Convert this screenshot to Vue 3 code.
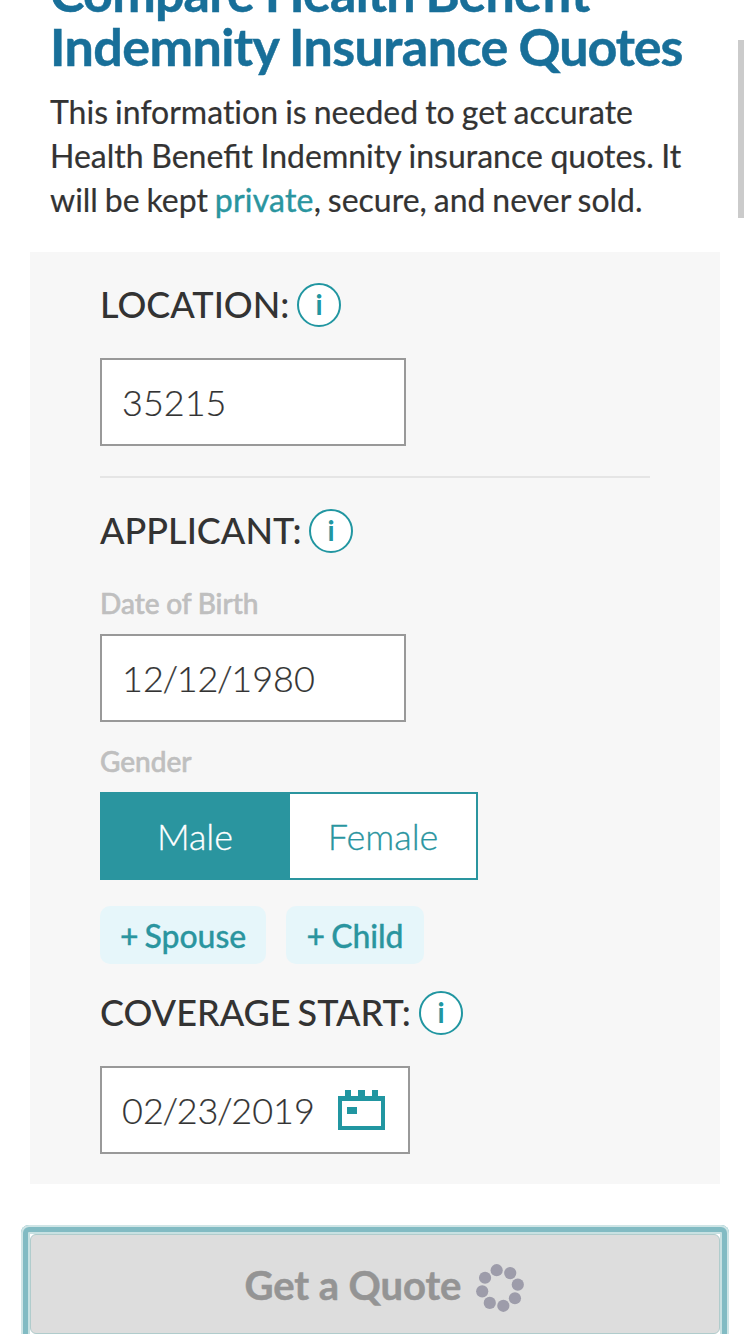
<script setup>
import { ref } from 'vue'

const gender = ref('Male')
const birth = ['12', '12', '1980']
const start = ['02', '23', '2019']
const dots = Array.from({ length: 8 }, (_, i) => {
  const a = ((-100.6 + i * 45) * Math.PI) / 180
  return { x: 24 + 18.1 * Math.cos(a), y: 24 + 18.1 * Math.sin(a) }
})
</script>

<template>
  <main class="page">
    <header class="intro">
      <h1>
        <span class="line top">Compare Health Benefit</span>
        <span class="line">Indemnity Insurance <span class="tight">Quotes</span></span>
      </h1>
      <p>
        <span class="line first">This informat&zwnj;ion is needed to get accurate</span>
        <span class="line second">Health Benefit Indemnity insurance quotes. It</span>
        <span class="line third">will be kept <a>private</a>, secure, and never sold.</span>
      </p>
    </header>

    <section class="card">
      <div class="heading"><h2 class="location">LOCATION:</h2><i class="info">i</i></div>
      <div class="field zip">35215</div>
      <hr />
      <div class="heading"><h2 class="applicant">APPLICANT:</h2><i class="info">i</i></div>
      <label class="label dob-label">Date of Birth</label>
      <div class="field dob">
        <span><template v-for="(n, i) in birth" :key="i"><b v-if="i" class="slash">/</b>{{ n }}</template></span>
      </div>
      <label class="label gender-label">Gender</label>
      <div class="toggle">
        <button v-for="g in ['Male', 'Female']" :key="g" :class="{ active: gender === g }" @click="gender = g">{{ g }}</button>
      </div>
      <div class="chips">
        <button class="spouse">+ Spouse</button>
        <button class="child">+ Child</button>
      </div>
      <div class="heading coverage-row"><h2 class="coverage">COVERAGE START:</h2><i class="info">i</i></div>
      <div class="field start">
        <span class="date"><template v-for="(n, i) in start" :key="i"><b v-if="i" class="slash">/</b>{{ n }}</template></span>
        <svg class="calendar" width="48" height="40" viewBox="0 0 48 40">
          <path fill="#2196a1" fill-rule="evenodd" d="M0 6H7V0H13V6H20V0H27V6H34V0H40V6H47V40H0ZM4 11V36H43V11Z" />
          <path fill="#2196a1" d="M9 17H19V24H9Z" />
        </svg>
      </div>
    </section>

    <div class="ring">
      <button class="quote">
        <span>Get a Quote</span>
        <svg width="48" height="48" viewBox="0 0 48 48">
          <circle v-for="(d, i) in dots" :key="i" :cx="d.x" :cy="d.y" r="6.1" fill="#9d9caa" />
        </svg>
      </button>
    </div>
    <div class="scrollbar"></div>
  </main>
</template>

<style>
body {
  background: #fff;
  overflow: hidden;
}
</style>

<style scoped>
.page {
  position: relative;
  display: flow-root;
  box-sizing: border-box;
  width: 750px;
  height: 1334px;
  overflow: hidden;
  font-family: Lato, sans-serif;
  color: #333;
}
button {
  font-family: inherit;
  margin: 0;
  padding: 0;
  border: 0;
}
.intro {
  margin-top: -35px;
  padding-left: 50px;
  height: 287px;
  box-sizing: border-box;
}
.line {
  display: block;
  white-space: nowrap;
}
h1 {
  margin: 0;
  font-size: 52px;
  line-height: 54px;
  font-weight: 700;
  letter-spacing: -0.56px;
  word-spacing: -1.2px;
  color: #186f99;
  -webkit-text-stroke: 0.5px #186f99;
}
.top {
  letter-spacing: -0.8px;
}
.tight {
  letter-spacing: -1.05px;
}
p {
  margin: 17px 0 0;
  font-size: 32px;
  line-height: 44px;
  -webkit-text-stroke: 0.2px;
}
.first { word-spacing: -1.1px; }
.second { word-spacing: -0.6px; }
.third { word-spacing: -1.3px; }
a {
  color: #2a959f;
  letter-spacing: 0.2px;
  -webkit-text-stroke: 0.4px;
}
.card {
  box-sizing: border-box;
  width: 690px;
  height: 932px;
  margin-left: 30px;
  padding: 31px 70px 0;
  background: #f7f7f7;
}
.heading {
  display: flex;
  align-items: center;
  height: 44px;
}
h2 {
  margin: 0;
  padding-bottom: 2px;
  font-size: 36px;
  line-height: 42px;
  font-weight: 500;
  white-space: nowrap;
}
.location { width: 197px; }
.applicant { width: 209px; }
.coverage {
  width: 319px;
  word-spacing: -2px;
}
.info {
  box-sizing: border-box;
  width: 44px;
  height: 44px;
  border: 2px solid #2196a1;
  border-radius: 50%;
  background: #fff;
  color: #2196a1;
  font-size: 28px;
  line-height: 38px;
  font-weight: 700;
  font-style: normal;
  text-align: center;
}
.field {
  box-sizing: border-box;
  display: flex;
  align-items: center;
  width: 306px;
  height: 88px;
  padding-left: 20px;
  border: 2px solid #999;
  background: #fff;
  font-size: 36px;
  font-weight: 300;
  -webkit-text-stroke: 0.2px;
}
.slash {
  margin: 0 -1.4px;
  font-weight: inherit;
}
.zip {
  margin-top: 31px;
}
hr {
  margin: 30px 0 31px;
  border: 0;
  height: 2px;
  background: #e5e5e5;
}
.label {
  display: block;
  height: 34px;
  font-size: 28px;
  line-height: 34px;
  font-weight: 500;
  word-spacing: -0.5px;
  color: #bfbfbf;
  -webkit-text-stroke: 0.6px;
}
.dob-label { margin-top: 33px; }
.dob { margin-top: 14px; }
.gender-label { margin-top: 22px; }
.toggle {
  box-sizing: border-box;
  display: flex;
  width: 378px;
  height: 88px;
  margin-top: 14px;
  border: 2px solid #2a959f;
}
.toggle button {
  background: #fff;
  color: #2a959f;
  font-size: 36px;
  font-weight: 300;
  -webkit-text-stroke: 0.3px;
}
.toggle button.active {
  width: 188px;
  padding-right: 2px;
  background: #2a959f;
  color: #fff;
}
.toggle button:last-child {
  flex: 1;
}
.chips {
  display: flex;
  gap: 20px;
  margin-top: 26px;
}
.chips button {
  height: 58px;
  border-radius: 10px;
  background: #e6f6fa;
  color: #2a959f;
  font-size: 32px;
  font-weight: 500;
  letter-spacing: -0.1px;
  word-spacing: -1.8px;
  -webkit-text-stroke: 0.3px;
}
.spouse { width: 166px; }
.child { width: 138px; }
.coverage-row { margin-top: 27px; }
.start {
  width: 310px;
  margin-top: 31px;
}
.date { width: 194px; }
.calendar {
  margin-left: 22px;
}
.ring {
  box-sizing: border-box;
  width: 708px;
  margin: 41px 0 0 21px;
  padding: 9px;
  border-radius: 8px;
  box-shadow: inset 0 0 0 2px #cfe5e6, inset 0 0 0 7px #82bbc3, inset 0 0 0 9px #c8e1e2;
}
.quote {
  box-sizing: border-box;
  display: flex;
  align-items: center;
  justify-content: center;
  gap: 15px;
  width: 690px;
  height: 100px;
  padding-left: 19px;
  padding-top: 7px;
  border: 1px solid #b0cccc;
  border-radius: 6px;
  background: #ddd;
  color: #949494;
  font-size: 40px;
  font-weight: 700;
}
.quote span {
  padding-bottom: 5px;
  letter-spacing: -0.1px;
  -webkit-text-stroke: 0.5px;
}
.scrollbar {
  position: absolute;
  top: 40px;
  left: 738px;
  width: 6px;
  height: 178px;
  background: #cbcbcb;
}
</style>
